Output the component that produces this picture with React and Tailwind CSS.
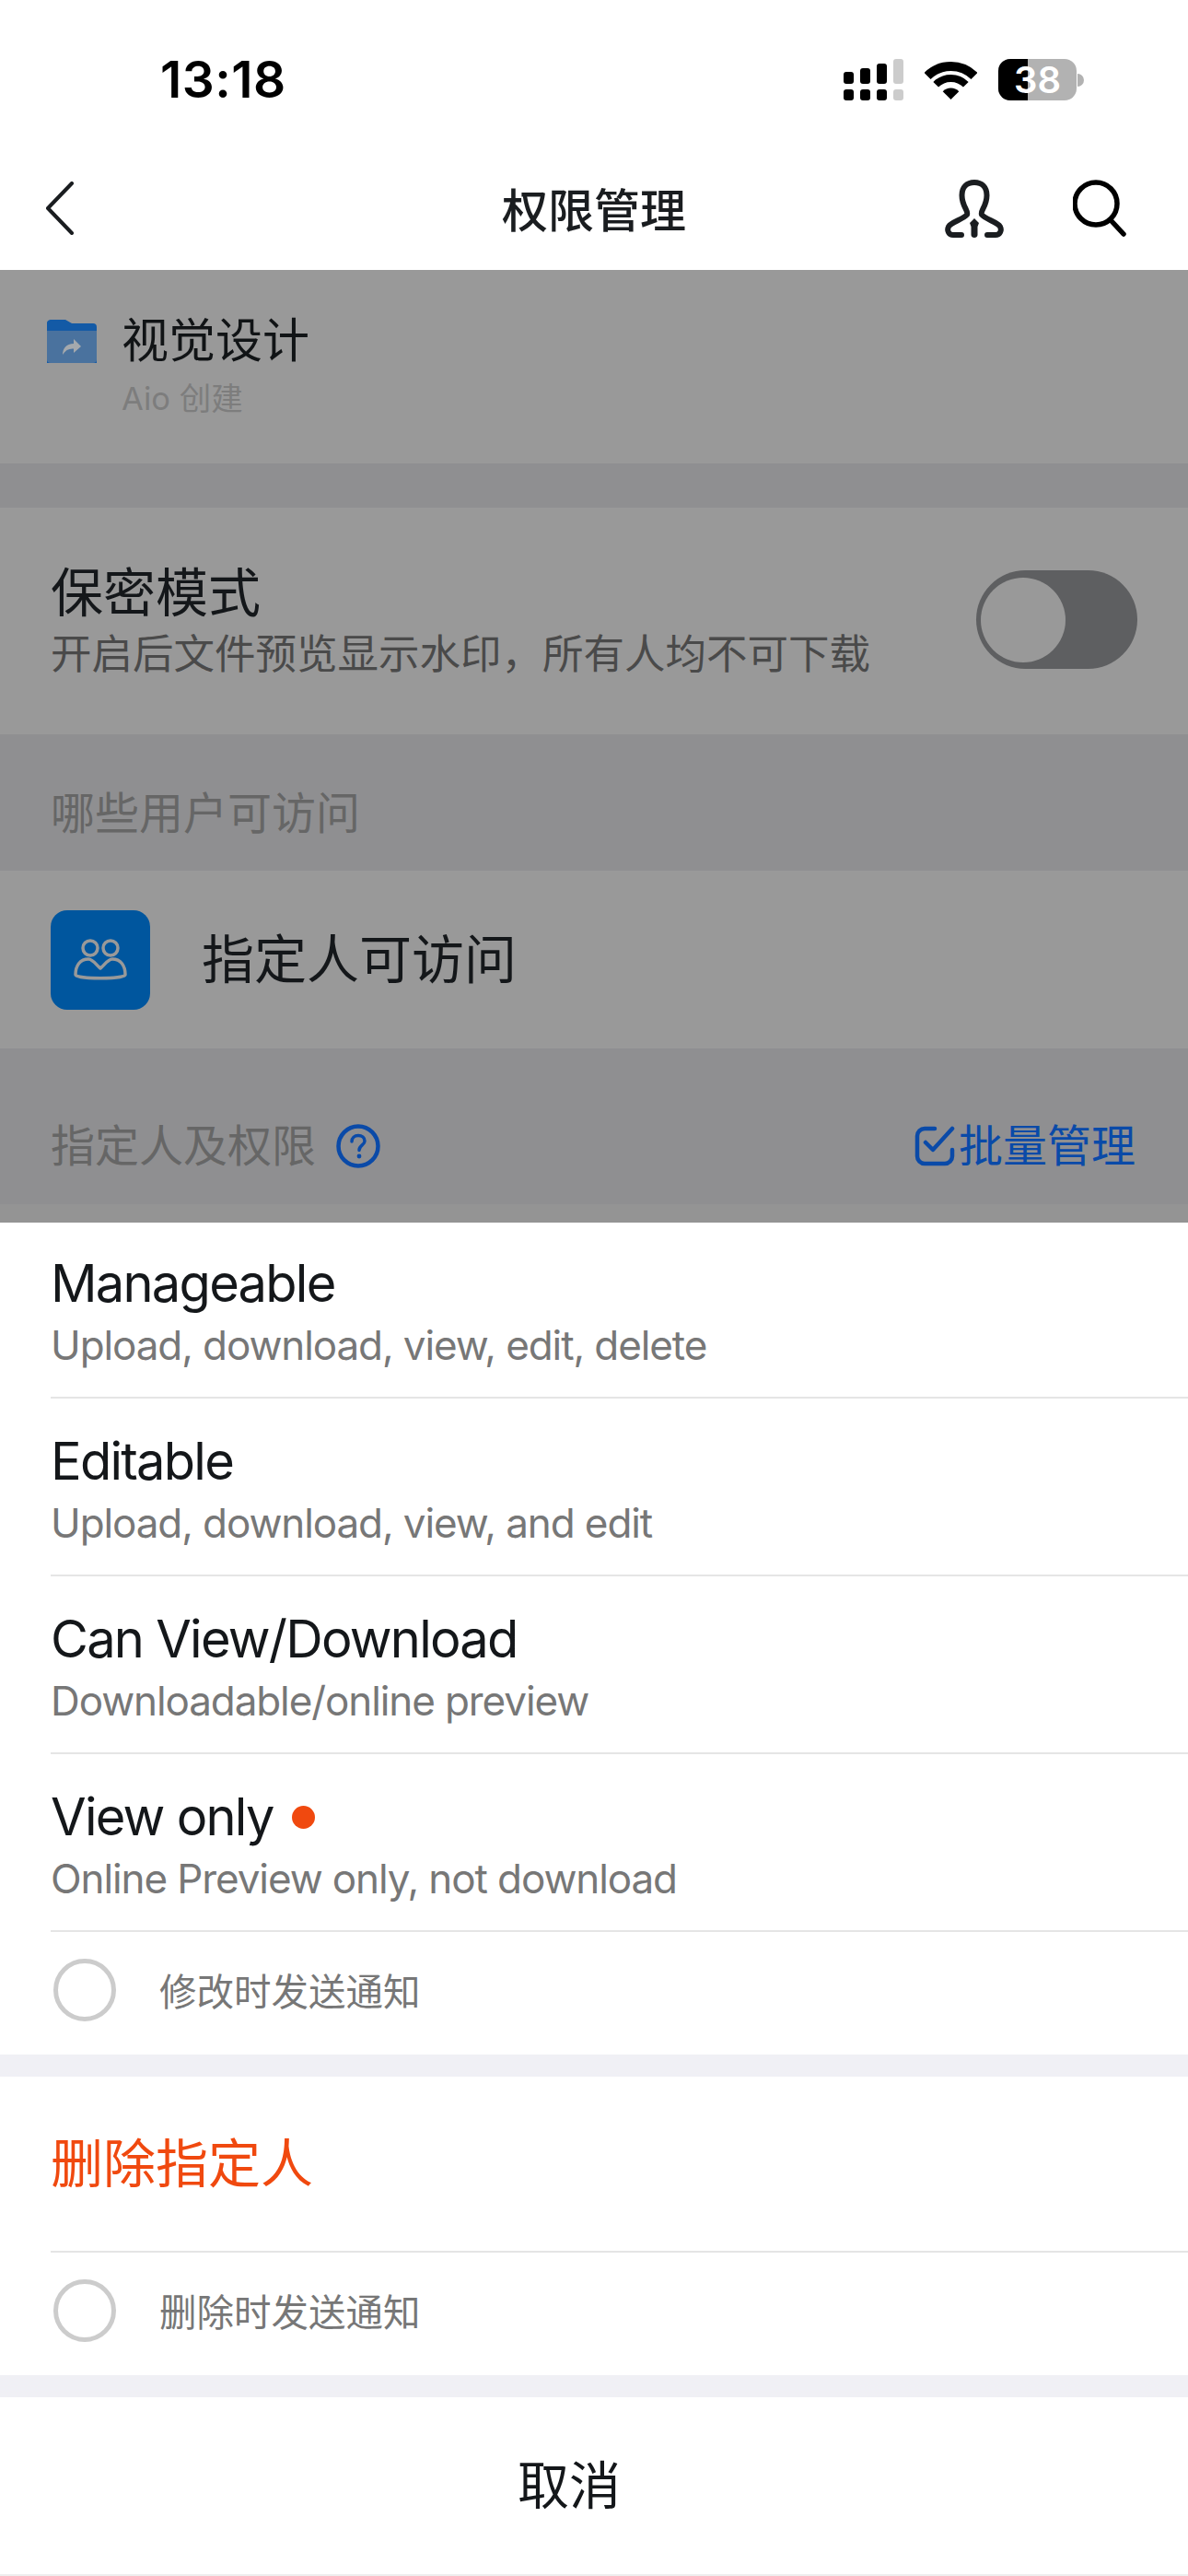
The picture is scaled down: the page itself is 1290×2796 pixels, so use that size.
const cjk = "font-['Inter','Noto_Sans_CJK_SC',sans-serif]";

const perms = [
  { title: "Manageable", sub: "Upload, download, view, edit, delete" },
  { title: "Editable", sub: "Upload, download, view, and edit" },
  { title: "Can View/Download", sub: "Downloadable/online preview" },
  { title: "View only", sub: "Online Preview only, not download", dot: true },
];

function Signal() {
  const tops = ["h-[13px]", "h-[17px]", "h-[22px]", "h-[27px]"];
  return (
    <div className="flex gap-[7px] h-[45px] items-end">
      {tops.map((h, i) => (
        <div key={h} className="flex flex-col gap-[6px] w-[11px]">
          <div className={`${h} rounded-[3px] ${i === 3 ? "bg-[#cccccc]" : "bg-black"}`} />
          <div className={`h-[12px] rounded-[3px] ${i === 3 ? "bg-[#cccccc]" : "bg-black"}`} />
        </div>
      ))}
    </div>
  );
}

function Wifi() {
  return (
    <svg width="57" height="42" viewBox="0 0 57 42" fill="none" className="mr-[23px] ml-[23px]">
      <path d="M3 16.5A36 36 0 0 1 54 16.5" stroke="black" strokeWidth="10" />
      <path d="M12.2 25.7A23 23 0 0 1 44.8 25.7" stroke="black" strokeWidth="8" />
      <path d="M28.5 42L19.7 33.2A12.5 12.5 0 0 1 37.3 33.2Z" fill="black" />
    </svg>
  );
}

function Battery() {
  return (
    <div className="flex items-center">
      <div className="w-[85px] h-[45px] rounded-[13px] flex items-center justify-center relative bg-[#b2b2b2]">
        <div className="absolute left-0 top-0 bottom-0 w-[32px] rounded-l-[13px] bg-black" />
        <span className="relative text-white font-semibold text-[40px] leading-[45px] font-['Inter',sans-serif]">38</span>
      </div>
      <div className="w-[7px] h-[14px] ml-[1px] rounded-r-full bg-[#b2b2b2]" />
    </div>
  );
}

function Radio({ label }) {
  return (
    <div className="flex items-center pl-[58px] gap-[47px] flex-1">
      <div className="w-[68px] h-[68px] rounded-full border-[5px] border-[#cccccc] -mt-[8px]" />
      <span className="text-[40.5px] leading-none text-[#777777]">{label}</span>
    </div>
  );
}

export default function App() {
  return (
    <div className={`w-[1290px] h-[2796px] flex flex-col overflow-hidden bg-white ${cjk}`}>
      {/* status + nav */}
      <div className="h-[293px] shrink-0 bg-white flex flex-col">
        <div className="flex items-center justify-between pt-[64px] pl-[174px] pr-[113px] h-[109px]">
          <span className="text-[55px] leading-none font-semibold text-black tracking-[0.5px] font-['Inter',sans-serif]">13:18</span>
          <div className="flex items-center">
            <Signal />
            <Wifi />
            <Battery />
          </div>
        </div>
        <div className="grid grid-cols-[1fr_auto_1fr] items-center mt-[84px] h-[66px]">
          <div className="pl-[49px]">
            <svg width="33" height="58" viewBox="0 0 33 58" fill="none">
              <path d="M29 2L3 29L29 56" stroke="#1a1d20" strokeWidth="4" strokeLinecap="round" strokeLinejoin="round" />
            </svg>
          </div>
          <span className="text-[50px] leading-none text-[#1a1d20] font-medium mt-[5px]">权限管理</span>
          <div className="flex justify-end items-center gap-[75px] pr-[67px]">
            <svg width="64" height="63" viewBox="0 0 64 63" fill="none">
              <path
                d="M18 60H9C4 60 2 55 4 51C7 46 20 43 24 38C26 34 18.5 29 18.5 17C18.5 8 24 3 32 3C40 3 45.5 8 45.5 17C45.5 29 38 34 40 38C44 43 57 46 60 51C62 55 60 60 55 60H46"
                stroke="#1a1d20"
                strokeWidth="6"
                strokeLinecap="round"
              />
              <path d="M32 42L37 47L35.5 51V60C35.5 64 28.5 64 28.5 60V51L27 47Z" fill="#1a1d20" />
            </svg>
            <svg width="58" height="62" viewBox="0 0 58 62" fill="none">
              <circle cx="25" cy="26" r="23" stroke="black" strokeWidth="5.5" />
              <path d="M42 45L55 59" stroke="black" strokeWidth="5.5" strokeLinecap="round" />
            </svg>
          </div>
        </div>
      </div>

      {/* dimmed page */}
      <div className="h-[210px] shrink-0 bg-[#999999] flex pl-[51px] pt-[54px]">
        <svg width="54" height="47" viewBox="0 0 54 47">
          <path d="M0 5a4 4 0 0 1 4-5h16l7 4h23a4 4 0 0 1 4 4v40H0Z" fill="#135aa6" />
          <path d="M0 12h54v31a4 4 0 0 1-4 4H4a4 4 0 0 1-4-4Z" fill="#4a729e" />
          <path d="M17 38C17 31 21 26 29 26V21L37 29L29 36V31.5C24 31 20 33 17 38Z" fill="#a5a9ad" />
        </svg>
        <div className="ml-[27px] flex flex-col">
          <span className="text-[51px] leading-[50px] text-[#111416] -mt-[2px]">视觉设计</span>
          <span className="text-[34.5px] leading-[36px] text-[#7d7d7d] mt-[20px]">Aio 创建</span>
        </div>
      </div>
      <div className="h-[48px] shrink-0 bg-[#8f8f91]" />
      <div className="h-[246px] shrink-0 bg-[#999999] flex items-center justify-between pl-[55px] pr-[55px]">
        <div className="flex flex-col">
          <span className="text-[57px] leading-[60px] text-[#14171a]">保密模式</span>
          <span className="text-[44.5px] leading-[50px] text-[#4a4a4a] mt-[11px]">开启后文件预览显示水印，所有人均不可下载</span>
        </div>
        <div className="w-[175px] h-[107px] rounded-full bg-[#5e5f61] flex items-center pl-[5px] -mt-[3px]">
          <div className="w-[92px] h-[92px] rounded-full bg-[#999999]" />
        </div>
      </div>
      <div className="h-[148px] shrink-0 bg-[#8f8f91] flex items-center pl-[55px] pt-[24px]">
        <span className="text-[48px] leading-none text-[#666666]">哪些用户可访问</span>
      </div>
      <div className="h-[193px] shrink-0 bg-[#999999] flex items-center pl-[55px]">
        <div className="w-[108px] h-[108px] rounded-[18px] bg-[#00569e]">
          <svg width="108" height="108" viewBox="0 0 108 108" fill="none" stroke="#999999" strokeWidth="3.5">
            <circle cx="43" cy="41" r="8" />
            <circle cx="65" cy="41" r="8" />
            <path d="M27 70C27 60 32 53 41 53C46 53 50 60 54 63C58 60 62 53 67 53C76 53 81 60 81 70C81 75 27 75 27 70Z" strokeLinejoin="round" />
          </svg>
        </div>
        <span className="text-[57px] leading-none text-[#14171a] ml-[56px]">指定人可访问</span>
      </div>
      <div className="h-[169px] shrink-0 bg-[#8f8f91] flex items-center justify-between pl-[55px] pr-[57px] pt-[42px]">
        <div className="flex items-center gap-[22px]">
          <span className="text-[48px] leading-none text-[#666666]">指定人及权限</span>
          <svg width="48" height="48" viewBox="0 0 48 48" fill="none">
            <circle cx="24" cy="24" r="21.5" stroke="#0a4aa8" strokeWidth="4.5" />
            <path d="M17 19C17 15 20 12.5 24 12.5C28 12.5 31 15 31 18.5C31 23 25 23 25 28.5" stroke="#0a4aa8" strokeWidth="3.5" strokeLinecap="round" />
            <circle cx="25" cy="35" r="2.4" fill="#0a4aa8" />
          </svg>
        </div>
        <div className="flex items-center gap-[4px]">
          <svg width="44" height="44" viewBox="0 0 44 44" fill="none" stroke="#0a4aa8" strokeWidth="4.5" strokeLinecap="round" strokeLinejoin="round">
            <path d="M22 3H11a8 8 0 0 0-8 8v22a8 8 0 0 0 8 8h22a8 8 0 0 0 8-8V26" />
            <path d="M12 18L20 26L41 3" />
          </svg>
          <span className="text-[48px] leading-none text-[#0a4aa8]">批量管理</span>
        </div>
      </div>
      <div className="h-[20px] shrink-0 bg-[#949494]" />

      {/* action sheet */}
      <div className="h-[903px] shrink-0 bg-white flex flex-col">
        <div className="flex flex-col">
          {perms.map((p, i) => (
            <div key={p.title} className={`ml-[55px] border-b-2 border-[#e5e5e5] flex flex-col ${i === 0 ? "h-[191px] pt-[31px]" : "h-[193px] pt-[33px]"}`}>
              <div className="flex items-center gap-[20px]">
                <span className="text-[56px] leading-[70px] text-[#14171a] tracking-[-1.75px]">{p.title}</span>
                {p.dot && <span className="w-[25px] h-[25px] rounded-full bg-[#f0490f]" />}
              </div>
              <span className="text-[44px] leading-[54px] text-[#777777] tracking-[-1.1px] mt-[5px]">{p.sub}</span>
            </div>
          ))}
        </div>
        <Radio label="修改时发送通知" />
      </div>
      <div className="h-[24px] shrink-0 bg-[#f0f0f5]" />
      <div className="h-[189px] shrink-0 bg-white flex items-center pl-[55px]">
        <span className="text-[57px] leading-none text-[#f0490f]">删除指定人</span>
      </div>
      <div className="ml-[55px] h-[2px] shrink-0 bg-[#e5e5e5]" />
      <div className="h-[133px] shrink-0 bg-white flex">
        <Radio label="删除时发送通知" />
      </div>
      <div className="h-[24px] shrink-0 bg-[#f0f0f5]" />
      <div className="flex-1 bg-white flex items-center pl-[562px] border-b-2 border-[#eeeeee]">
        <span className="text-[56px] leading-none text-[#14171a]">取消</span>
      </div>
    </div>
  );
}
